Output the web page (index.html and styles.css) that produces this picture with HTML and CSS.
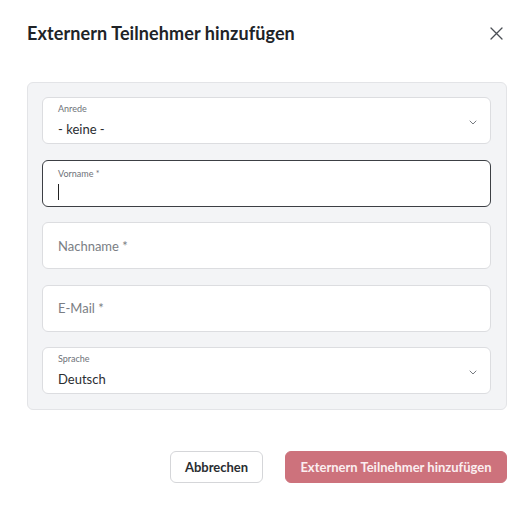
FILE: index.html
```html
<!DOCTYPE html>
<html lang="de">
<head>
<meta charset="utf-8">
<link rel="stylesheet" href="styles.css">
</head>
<body>
<div class="dialog">
  <div class="header">
    <h1 class="title">Externern Teilnehmer hinzufügen</h1>
    <button class="close" aria-label="Schließen">
      <svg width="13" height="13" viewBox="0 0 13 13"><path d="M1 1L12 12M12 1L1 12" stroke="#4b4f55" stroke-width="1.3" fill="none" stroke-linecap="round"/></svg>
    </button>
  </div>
  <div class="panel">
    <div class="field select">
      <span class="label">Anrede</span>
      <span class="value">- keine -</span>
      <svg class="chev" width="8" height="5" viewBox="0 0 8 5"><path d="M1 1L4 4L7 1" stroke="#777b81" stroke-width="1" fill="none" stroke-linecap="round"/></svg>
    </div>
    <div class="field focused">
      <span class="label">Vorname *</span>
      <span class="caret"></span>
    </div>
    <div class="field empty">
      <span class="placeholder">Nachname *</span>
    </div>
    <div class="field empty">
      <span class="placeholder">E-Mail *</span>
    </div>
    <div class="field select">
      <span class="label">Sprache</span>
      <span class="value">Deutsch</span>
      <svg class="chev" width="8" height="5" viewBox="0 0 8 5"><path d="M1 1L4 4L7 1" stroke="#777b81" stroke-width="1" fill="none" stroke-linecap="round"/></svg>
    </div>
  </div>
  <div class="actions">
    <button class="btn secondary">Abbrechen</button>
    <button class="btn primary">Externern Teilnehmer hinzufügen</button>
  </div>
</div>
</body>
</html>
```
FILE: styles.css
```css
* { box-sizing: border-box; }
html, body { margin: 0; padding: 0; background: #fff; }
body {
  font-family: "Lato", "Open Sans", sans-serif;
  color: #202327;
  width: 530px;
  height: 509px;
  overflow: hidden;
}
.dialog {
  padding: 20px 23px 0 27px;
}
.header {
  display: flex;
  align-items: center;
  justify-content: space-between;
  height: 26px;
}
.title {
  margin: 0;
  font-size: 18px;
  font-weight: 700;
  color: #202327;
  letter-spacing: 0.1px;
}
.close {
  border: 0;
  background: none;
  padding: 0;
  margin-right: 4px;
  width: 13px;
  height: 13px;
  display: flex;
}
.panel {
  margin-top: 36px;
  background: #f3f4f6;
  border: 1px solid #e3e4e7;
  border-radius: 6px;
  padding: 14px 15px 15px 14px;
  display: flex;
  flex-direction: column;
  gap: 15.5px;
}
.field {
  position: relative;
  height: 47px;
  background: #fff;
  border: 1px solid #dcdde0;
  border-radius: 6px;
  padding: 0 15px;
  display: flex;
  flex-direction: column;
  justify-content: center;
}
.field.focused { border-color: #3c3f44; justify-content: flex-start; padding-top: 7px; }
.label {
  font-size: 9px;
  color: #6e7278;
  line-height: 12px;
}
.value {
  font-size: 13px;
  color: #2a2d31;
  line-height: 18px;
  margin-top: 5px;
}
.placeholder {
  font-size: 13px;
  color: #7a7e84;
}
.caret {
  display: block;
  width: 1px;
  height: 16px;
  background: #222;
  margin-top: 4px;
}
.chev {
  position: absolute;
  right: 13px;
  top: 22px;
}
.actions {
  margin-top: 41px;
  display: flex;
  justify-content: flex-end;
  gap: 22px;
}
.btn {
  font-family: inherit;
  font-size: 13px;
  font-weight: 700;
  height: 32px;
  border-radius: 6px;
  cursor: pointer;
}
.secondary {
  width: 93px;
  background: #fff;
  border: 1px solid #d5d6d9;
  color: #2a2d31;
}
.primary {
  width: 222px;
  background: #cd727c;
  border: 1px solid #cd727c;
  color: #fbeef0;
}
```
